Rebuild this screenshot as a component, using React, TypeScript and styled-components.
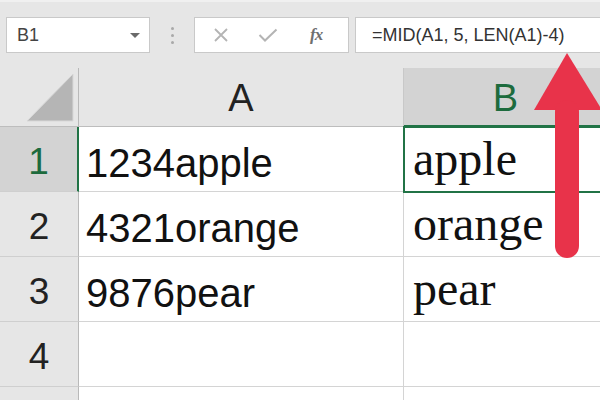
import React from "react";
import styled, { createGlobalStyle } from "styled-components";

const GlobalStyle = createGlobalStyle`
  html, body {
    margin: 0;
    padding: 0;
    background: #e6e6e6;
    overflow: hidden;
  }
`;

const green = "#217346";

const Page = styled.div`
  position: relative;
  width: 600px;
  height: 400px;
  overflow: hidden;
  background: #e6e6e6;
  font-family: "Liberation Sans", Arial, sans-serif;
`;

// formula bar across the top
const Toolbar = styled.div`
  display: flex;
  align-items: flex-start;
  height: 68px;
  box-sizing: border-box;
  padding: 15px 0 0 6px;
  border-top: 2px solid #f0f0f0;
`;

const NameBox = styled.div`
  display: flex;
  align-items: center;
  justify-content: space-between;
  box-sizing: border-box;
  width: 144px;
  height: 36px;
  padding: 0 9px 0 10px;
  background: #fff;
  border: 1px solid #c9c9c9;
  font-size: 18px;
  color: #444;
`;

const Caret = styled.span`
  width: 0;
  height: 0;
  border-left: 5px solid transparent;
  border-right: 5px solid transparent;
  border-top: 5px solid #6a6a6a;
`;

const Grip = styled.div`
  display: flex;
  flex-direction: column;
  align-items: center;
  justify-content: center;
  gap: 4px;
  width: 44px;
  height: 36px;
`;

const GripDot = styled.span`
  width: 3px;
  height: 3px;
  border-radius: 50%;
  background: #a9a9a9;
`;

const ButtonGroup = styled.div`
  display: flex;
  align-items: center;
  box-sizing: border-box;
  width: 155px;
  height: 36px;
  padding-left: 18px;
  background: #fff;
  border: 1px solid #c9c9c9;
`;

const BarButton = styled.span<{ $w: number }>`
  display: flex;
  align-items: center;
  width: ${(p) => p.$w}px;
  height: 100%;
`;

const Fx = styled.span`
  font-family: "Liberation Serif", "Times New Roman", serif;
  font-style: italic;
  font-weight: bold;
  font-size: 17px;
  color: #6f6f6f;
  letter-spacing: -1px;
`;

const FormulaInput = styled.div`
  flex: 1;
  box-sizing: border-box;
  height: 36px;
  margin-left: 6px;
  padding-left: 16px;
  line-height: 34px;
  background: #fff;
  border: 1px solid #c9c9c9;
  border-right: none;
  font-size: 18px;
  color: #333;
  white-space: nowrap;
`;

// the sheet itself
const Sheet = styled.div`
  display: grid;
  grid-template-columns: 79px 325px 204px;
  grid-template-rows: 59px repeat(5, 65px);
`;

const Corner = styled.div`
  display: flex;
  align-items: flex-end;
  justify-content: flex-end;
  box-sizing: border-box;
  padding: 0 4px 4px 0;
  background: #e6e6e6;
  border-right: 1px solid #b9b9b9;
  border-bottom: 1px solid #bdbdbd;
`;

const ColHeader = styled.div<{ $active?: boolean }>`
  box-sizing: border-box;
  text-align: center;
  font-size: 38px;
  line-height: 55px;
  padding-top: 3px;
  color: ${(p) => (p.$active ? "#1d6b3d" : "#222")};
  background: ${(p) => (p.$active ? "#d3d3d3" : "#e6e6e6")};
  border-right: 1px solid #c8c8c8;
  border-bottom: ${(p) => (p.$active ? `2px solid ${green}` : "1px solid #bdbdbd")};
`;

const RowHeader = styled.div<{ $active?: boolean }>`
  box-sizing: border-box;
  text-align: center;
  font-size: 37px;
  line-height: 58px;
  padding-top: 6px;
  color: ${(p) => (p.$active ? "#1d6b3d" : "#222")};
  background: ${(p) => (p.$active ? "#d3d3d3" : "#e6e6e6")};
  border-right: ${(p) => (p.$active ? `2px solid ${green}` : "1px solid #b9b9b9")};
  border-bottom: 1px solid #cfcfcf;
`;

const Cell = styled.div<{ $serif?: boolean; $selected?: boolean }>`
  position: relative;
  box-sizing: border-box;
  background: #fff;
  white-space: nowrap;
  border-right: 1px solid #d4d4d4;
  border-bottom: 1px solid #d4d4d4;
  color: #111;
  font-family: ${(p) =>
    p.$serif
      ? `"Liberation Serif", "Times New Roman", serif`
      : `"Liberation Sans", Arial, sans-serif`};
  font-size: ${(p) => (p.$serif ? 48 : 40)}px;
  padding: ${(p) => (p.$serif ? "0 0 0 9px" : "8px 0 0 7px")};
  line-height: ${(p) => (p.$serif ? 64 : 56)}px;
  ${(p) =>
    p.$selected &&
    `outline: 2px solid ${green}; outline-offset: -1px; z-index: 1;`}
`;

// red pointer drawn over the sheet
const ArrowLayer = styled.svg`
  position: absolute;
  left: 530px;
  top: 50px;
  z-index: 5;
`;

const CornerMark = () => (
  <svg width="48" height="49" viewBox="0 0 48 49">
    <polygon points="1,48 47,48 47,1" fill="#b5b5b5" stroke="#d8d8d8" strokeWidth="1" />
  </svg>
);

const CancelIcon = () => (
  <svg width="16" height="14" viewBox="0 0 16 14">
    <path d="M2 1 L14 13 M14 1 L2 13" stroke="#b4b4b4" strokeWidth="1.8" fill="none" />
  </svg>
);

const EnterIcon = () => (
  <svg width="20" height="14" viewBox="0 0 20 14">
    <path d="M1.5 7 L7 12.5 L18.5 1.5" stroke="#b4b4b4" strokeWidth="2" fill="none" />
  </svg>
);

const rows: [string, string][] = [
  ["1234apple", "apple"],
  ["4321orange", "orange"],
  ["9876pear", "pear"],
  ["", ""],
  ["", ""],
];

const App = () => {
  return (
    <Page>
      <GlobalStyle />
      <Toolbar>
        <NameBox>
          <span>B1</span>
          <Caret />
        </NameBox>
        <Grip>
          <GripDot />
          <GripDot />
          <GripDot />
        </Grip>
        <ButtonGroup>
          <BarButton $w={45}>
            <CancelIcon />
          </BarButton>
          <BarButton $w={52}>
            <EnterIcon />
          </BarButton>
          <BarButton $w={30}>
            <Fx>fx</Fx>
          </BarButton>
        </ButtonGroup>
        <FormulaInput>=MID(A1, 5, LEN(A1)-4)</FormulaInput>
      </Toolbar>

      <Sheet>
        <Corner>
          <CornerMark />
        </Corner>
        <ColHeader>A</ColHeader>
        <ColHeader $active>B</ColHeader>
        {rows.map(([a, b], i) => (
          <React.Fragment key={i}>
            <RowHeader $active={i === 0}>{i < 4 ? i + 1 : ""}</RowHeader>
            <Cell>{a}</Cell>
            <Cell $serif $selected={i === 0}>
              {b}
            </Cell>
          </React.Fragment>
        ))}
      </Sheet>

      <ArrowLayer width="70" height="212" viewBox="0 0 70 212">
        <polygon points="37,3 4,60 72,60" fill="#e8334a" />
        <rect x="25" y="50" width="24" height="158" rx="12" fill="#e8334a" />
      </ArrowLayer>
    </Page>
  );
};

export default App;
